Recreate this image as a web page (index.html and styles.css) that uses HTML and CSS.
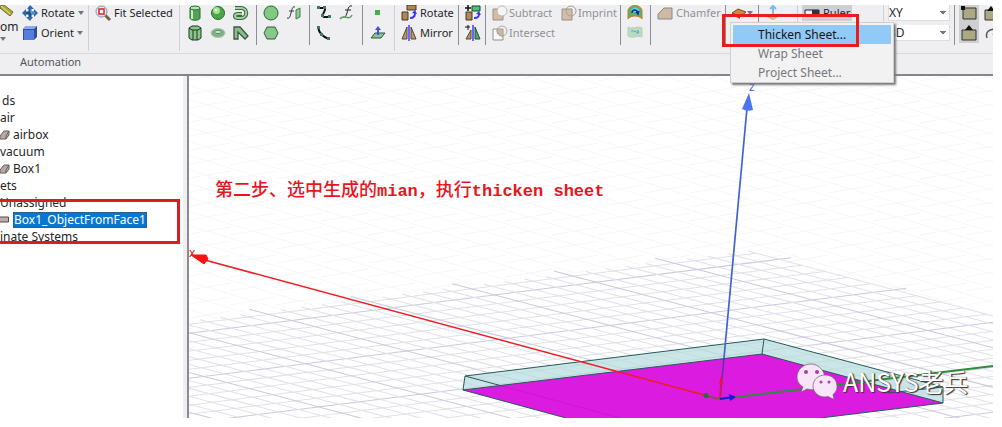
FILE: index.html
```html
<!DOCTYPE html>
<html lang="en">
<head>
<meta charset="utf-8">
<title>3D Modeler</title>
<link rel="stylesheet" href="styles.css">
</head>
<body>
<main class="app">
<header class="ribbon">
<div class="tools">
  <div class="group g-view">
    <button class="zoom-tool"><svg class="pencil" viewBox="0 0 14 12"><path d="M0 1l4-1 9 7-3 4-10-8z" fill="#b0ad3c" stroke="#6b6a32"/><path d="M1 1l9 8" stroke="#e8e6a0"/></svg><span>om</span><i class="caret"></i></button>
    <div class="pair">
      <button><svg class="ico" viewBox="0 0 16 16"><path d="M8 2v11M2 8h12" stroke="#1d4f86" stroke-width="3"/><path d="M8 0l4 4H5zM0 8l4-4v8zM16 8l-4-4v8zM8 16l-4-4h7z" fill="#2c6cad"/><path d="M9 4v4h4" fill="none" stroke="#8cc0ee"/></svg>Rotate<i class="caret"></i></button>
      <button><svg class="ico" viewBox="0 0 16 16"><path d="M1 4l3-3h11v11l-3 3H1z" fill="#2d4f9e"/><path d="M1 4l3-3h11l-3 3z" fill="#8eaaf0"/><path d="M2 5h10v10H2z" fill="#557de0"/></svg>Orient<i class="caret"></i></button>
    </div>
  </div>
  <div class="group g-fit tall"><button><svg class="ico" viewBox="0 0 16 16"><path d="M10 10l5 5" stroke="#7b5d4a" stroke-width="3"/><circle cx="6.500" cy="6.500" r="5.500" fill="#dbe7fb" stroke="#8a91a6"/><path d="M4 4h5v5H4z" fill="#fff" stroke="#e32222" stroke-width="1.500"/></svg>Fit Selected</button></div>
  <div class="group g-solid tall icons3">
    <button aria-label="Cylinder"><svg class="ico" viewBox="0 0 16 16"><path d="M3 3v10c0 3 10 3 10 0V3" fill="#54a354" stroke="#286b32"/><path d="M5 4v10" stroke="#c8edc5" stroke-width="2"/><ellipse cx="8" cy="3" rx="5" ry="2" fill="#b0e5a9" stroke="#286b32"/></svg></button>
    <button aria-label="Sphere"><svg class="ico" viewBox="0 0 16 16"><circle cx="8" cy="8" r="6.500" fill="#4ba447" stroke="#276f2e"/><circle cx="6.500" cy="5.500" r="3.500" fill="#9ee08c"/><circle cx="6" cy="5" r="1.500" fill="#e5ffdf"/></svg></button>
    <button aria-label="Helix"><svg class="ico" viewBox="0 0 16 16"><path d="M2 3h6c7 0 7 10 0 10H5c-4 0-4-4 0-4h4" fill="none" stroke="#3b6842" stroke-width="4"/><path d="M2 3h6c7 0 7 10 0 10H5c-4 0-4-4 0-4h4" fill="none" stroke="#a3cfa2" stroke-width="2"/></svg></button>
    <button aria-label="Regular polyhedron"><svg class="ico" viewBox="0 0 16 16"><path d="M2 3l3-2h6l3 2v10l-3 2H5l-3-2z" fill="#8ec48c" stroke="#153c1e"/><path d="M2 3l3 2h6l3-2M6 5v10M10 5v10" fill="none" stroke="#153c1e"/></svg></button>
    <button aria-label="Torus"><svg class="ico" viewBox="0 0 16 16"><ellipse cx="8" cy="8" rx="7" ry="4.500" fill="#80b487" stroke="#a9c8ac"/><ellipse cx="8" cy="7" rx="3.500" ry="1.500" fill="#d7eed8" stroke="#558b5c"/></svg></button>
    <button aria-label="Bend"><svg class="ico" viewBox="0 0 16 16"><path d="M1 14V2h6l8 9-3 3-7-7v7z" fill="#8fba8f" stroke="#345b3b" stroke-width="1.300"/></svg></button>
  </div>
  <div class="group g-sheet icons2">
    <button aria-label="Circle"><svg class="ico" viewBox="0 0 16 16"><circle cx="8" cy="8" r="7" fill="#80ca82" stroke="#31613d"/></svg></button>
    <button aria-label="Equation surface"><svg class="ico" viewBox="0 0 16 16"><path d="M9 2C6 1 6 5 5 8s-1 6-4 5M3 6h5" fill="none" stroke="#333"/><path d="M10 5l4-2v9l-4 2z" fill="#91cb91" stroke="#457c4b"/></svg></button>
    <button aria-label="Polygon"><svg class="ico" viewBox="0 0 16 16"><path d="M1 8l3-6h8l3 6-3 6H4z" fill="#87c98a" stroke="#31613d"/></svg></button>
  </div>
  <div class="group g-line icons2">
    <button aria-label="Polyline"><svg class="ico" viewBox="0 0 16 16"><path d="M2 3h6c4 0-4 8 0 9h6" fill="none" stroke="#111" stroke-width="2"/><path d="M1 1h3v3H1zM7 1h3v3H7zM5 9h3v3H5zM12 10h3v3h-3z" fill="#397b63"/></svg></button>
    <button aria-label="Equation curve"><svg class="ico" viewBox="0 0 16 16"><path d="M13 1C9 0 9 5 8 8s-2 5-4 4M6 5h6" fill="none" stroke="#222"/><path d="M1 14c4-6 9 3 12-4" fill="none" stroke="#67976d" stroke-width="1.500"/></svg></button>
    <button aria-label="Arc"><svg class="ico" viewBox="0 0 16 16"><path d="M2 2c1 6 5 10 11 12" fill="none" stroke="#111" stroke-width="2"/><path d="M1 1h3v3H1zM4 8h3v3H4zM11 12h3v3h-3z" fill="#397b63"/></svg></button>
  </div>
  <div class="group g-point">
    <button aria-label="Point"><svg class="ico" viewBox="0 0 16 16"><path d="M5 5h5v5H5z" fill="#43ad4b"/></svg></button>
    <button aria-label="Plane"><svg class="ico" viewBox="0 0 16 16"><path d="M1 13l4-5h10l-4 5z" fill="#91be97" stroke="#285a33"/><path d="M8 10V4" stroke="#444dec" stroke-width="2"/><path d="M5 5l3-4 3 4z" fill="#444dec"/></svg></button>
  </div>
  <div class="group g-rotate tall">
    <button><svg class="ico" viewBox="0 0 16 16"><path d="M6 0h9v5H6zM1 7h6v8H1z" fill="#aa8859" stroke="#493923"/><path d="M9 13c4 0 5-2 5-5" fill="none" stroke="#3838f3" stroke-width="2"/><path d="M11 8l3-3 2 4z" fill="#3838f3"/></svg>Rotate</button>
    <button><svg class="ico" viewBox="0 0 16 16"><path d="M6 2v12H1zM10 2v12h5z" fill="#b59870" stroke="#57452f"/><path d="M8 0v16" stroke="#686aff" stroke-width="2"/></svg>Mirror</button>
  </div>
  <div class="group g-copy">
    <button aria-label="Duplicate around axis"><svg class="ico" viewBox="0 0 16 16"><path d="M1 7h6v8H1z" fill="#aa8859" stroke="#493923"/><path d="M7 1h8v5H7z" fill="#4dc377" stroke="#174c27"/><path d="M3 0v6M0 3h6" stroke="#111" stroke-width="1.500"/><path d="M9 13c4 0 5-1 5-4" fill="none" stroke="#3838f3" stroke-width="2"/><path d="M11 9l3-3 2 4z" fill="#3838f3"/></svg></button>
    <button aria-label="Duplicate mirror"><svg class="ico" viewBox="0 0 16 16"><path d="M6 5v9H1z" fill="#b59870" stroke="#57452f"/><path d="M10 2v12h5z" fill="#56a474" stroke="#22532f"/><path d="M8 0v16" stroke="#686aff" stroke-width="2"/><path d="M3 0v5M0 2h5" stroke="#111"/></svg></button>
  </div>
  <div class="group g-bool muted">
    <button><svg class="ico" viewBox="0 0 16 16"><path d="M1 4h10v11H1z" fill="#d4bca8" stroke="#96918b"/><circle cx="10" cy="6" r="5" fill="#f5f5f5" stroke="#bbb"/></svg>Subtract</button>
    <button><svg class="ico" viewBox="0 0 16 16"><path d="M1 4h10v11H1z" fill="#d4bca8" stroke="#96918b"/><circle cx="10" cy="6" r="5" fill="none" stroke="#a69e97"/></svg>Imprint</button>
    <button><svg class="ico" viewBox="0 0 16 16"><path d="M1 4h10v11H1z" fill="#f8f8f8" stroke="#96918b"/><circle cx="10" cy="6" r="5" fill="#eee" stroke="#aaa"/><path d="M5 4h6v7C7 11 5 8 5 4z" fill="#d1b8a0" stroke="#a69e97"/></svg>Intersect</button>
  </div>
  <div class="group g-surface">
    <button aria-label="Move faces"><svg class="ico" viewBox="0 0 16 16"><path d="M1 14V5c2-6 12-6 14 0v9c-3-4-11-4-14 0z" fill="#55b565" stroke="#df732a"/><path d="M4 5c3-4 8-3 9 2v2c-2-3-6-3-8 0z" fill="#5fd2df"/><path d="M5 8c0-4 5-4 6 0M9 7l2 2 1-3" fill="none" stroke="#1828a8" stroke-width="1.500"/></svg></button>
    <button aria-label="Sheet surface"><svg class="ico" viewBox="0 0 16 16"><path d="M1 2c5 3 8-2 14 1v9c-5-2-9 2-14-1z" fill="#b1dfc6" stroke="#c7c9b2"/><path d="M4 6c4-1 4 2 8 1M10 5l2 2-2 2" fill="none" stroke="#8097b2"/></svg></button>
  </div>
  <div class="group g-chamfer muted"><button><svg class="ico" viewBox="0 0 16 16"><path d="M1 14V9l6-6h8v11z" fill="#ceb9a6" stroke="#8c8883"/></svg>Chamfer</button></div>
  <div class="group g-sheetmenu"><button aria-label="Sheet operations"><svg class="ico" viewBox="0 0 16 16"><path d="M1 8l6-4 8 3-6 5z" fill="#c78c3c" stroke="#70502b"/><path d="M1 8v2l8 4v-3z" fill="#80582e"/></svg><i class="caret"></i></button>
    <div class="menu" role="menu"><button class="chosen" role="menuitem">Thicken Sheet...</button><button role="menuitem">Wrap Sheet</button><button role="menuitem">Project Sheet...</button></div>
    <div class="menu-mark"></div>
  </div>
  <div class="group g-axis"><button aria-label="Coordinate system"><svg class="ico" viewBox="0 0 16 16"><path d="M8 12V2M5 4l3-3 3 3" fill="none" stroke="#83b8db" stroke-width="2"/><path d="M2 11l6 3 6-4" fill="none" stroke="#e4b17b" stroke-width="2"/></svg></button></div>
  <div class="group g-ruler tall"><button class="pressed"><svg class="ico" viewBox="0 0 16 16"><path d="M1 5h14v6H1z" fill="#eee" stroke="#222"/><path d="M8 5h7v6H8z" fill="#333"/></svg>Ruler</button></div>
  <div class="group g-select tall">
    <select aria-label="Drawing plane"><option>XY</option></select>
    <select aria-label="Movement mode"><option>3D</option></select>
  </div>
  <div class="group g-snap icons2">
    <button class="pressed" aria-label="Snap to vertex"><svg class="ico" viewBox="0 0 16 16"><path d="M2 3h13v11H2z" fill="#aaa982" stroke="#333"/><path d="M0 1h4v4H0z" fill="#111"/></svg></button>
    <button aria-label="Snap to edge center"><svg class="ico" viewBox="0 0 16 16"><path d="M1 5h14v10H1z" fill="#aaa982" stroke="#333"/><path d="M3 6l4-5 4 5z" fill="#111"/></svg></button>
    <button class="pressed" aria-label="Snap to face center"><svg class="ico" viewBox="0 0 16 16"><path d="M1 5h14v10H1z" fill="#aaa982" stroke="#333"/><path d="M4 5l4-5 4 5z" fill="#111"/></svg></button>
    <button aria-label="Snap to arc"><svg class="ico" viewBox="0 0 16 16"><path d="M3 13c-2-6 2-9 9-9M9 9l5 5" fill="none" stroke="#555" stroke-width="1.500"/></svg></button>
  </div>
</div>
<div class="caption">Automation</div>
</header>
<div class="work">
<nav class="tree" aria-label="Model tree">
  <ul>
    <li class="inset">ds</li>
    <li>air</li>
    <li><svg class="part" viewBox="0 0 10 10"><path d="M0 6l4-5h5v4L6 9H0z" fill="#b8a8a8" stroke="#655c5c"/><path d="M9 1L6 6v3" fill="none" stroke="#655c5c"/></svg>airbox</li>
    <li>vacuum</li>
    <li><svg class="part" viewBox="0 0 10 10"><path d="M0 6l4-5h5v4L6 9H0z" fill="#b8a8a8" stroke="#655c5c"/><path d="M9 1L6 6v3" fill="none" stroke="#655c5c"/></svg>Box1</li>
    <li>ets</li>
    <li>Unassigned</li>
    <li><svg class="part" viewBox="0 0 10 10"><path d="M-2 2H8.500v5H-2z" fill="#c0aaa8" stroke="#554c4c"/></svg><span class="selected">Box1_ObjectFromFace1</span></li>
    <li>inate Systems</li>
  </ul>
  <div class="tree-mark"></div>
</nav>
<section class="view" aria-label="3D view">
<svg class="scene" viewBox="189 76 804 342" preserveAspectRatio="xMinYMin slice">
  <defs>
    <pattern id="haze" width="46" height="14" patternUnits="userSpaceOnUse"><path d="M0 0l46 14M0 11l46-8" stroke="#f7f7f9" fill="none"/></pattern>
    <g id="rowlines"><path d="M0 7h900M0 47h900M0 67h900M0 87h900" class="minor"/><path d="M-12 27h912" class="major"/></g>
    <g id="collines"><path d="M0 0v700M20 0v700M40 0v700M60 0v700" class="minor"/><path d="M80-10v710" class="major"/></g>
  </defs>
  <rect x="189" y="76" width="804" height="342" fill="url(#haze)"/>
  <path d="M737 253L993 319V418H189V322z" fill="#fff"/>
  <g transform="matrix(-1.015 .1275 1.15 .305 748 251)">
    <use href="#rowlines"/><use href="#rowlines" y="100"/><use href="#rowlines" y="200"/><use href="#rowlines" y="300"/><use href="#rowlines" y="400"/><use href="#rowlines" y="500"/>
    <use href="#collines"/><use href="#collines" x="100"/><use href="#collines" x="200"/><use href="#collines" x="300"/><use href="#collines" x="400"/><use href="#collines" x="500"/><use href="#collines" x="600"/><use href="#collines" x="700"/><use href="#collines" x="800"/>
  </g>
  <path d="M465 376L764 339 943 387V403L762 354 463 390z" fill="#b5dcdb" fill-opacity=".7"/>
  <path d="M463 390L762 354 943 403 820 418H566z" fill="#dc1be0"/>
  <path d="M463 390L465 376 764 339 943 387V403L820 418M764 339L762 354M463 390L762 354 943 403M465 376L502 386M943 387L888 393M463 390L566 418" fill="none" stroke="#24595a"/>
  <path d="M502 386L620 418" stroke="#c817d0"/>
  <path d="M720 399L993 366" stroke="#2e8b37" stroke-width="2"/>
  <path d="M201 259L708 396" stroke="#ee1c24" stroke-width="1.500"/>
  <path d="M191 255l15 0 2 4-4 5z" fill="#f11" stroke="#f11"/>
  <path d="M747 108L724 358" stroke="#4263d6" stroke-width="1.700"/>
  <path d="M724 358L720 399" stroke="#65329a" stroke-width="1.500"/>
  <path d="M749 93l4 17q-6 2-11-1z" fill="#4a73f0"/>
  <path d="M720 398L721 378" stroke="#f1113a" stroke-width="1.500"/><path d="M721 376l2 8h-4z" fill="#f1113a"/>
  <path d="M706 396L720 399" stroke="#6e5b30" stroke-width="1.500"/><circle cx="706" cy="395.500" r="2.500" fill="#276d3a"/>
  <path d="M720 399L733 397" stroke="#1616df" stroke-width="2"/><path d="M729 394l7 3-6 4z" fill="#1616df"/>
  <text x="189" y="257" class="axis" fill="#e11">x</text>
  <text x="749" y="91" class="axis" fill="#3b5be0">z</text>
  <text x="215" y="196" class="note"><tspan>第二步、选中生成的</tspan><tspan class="latin">mian</tspan><tspan>，执行</tspan><tspan class="latin">thicken sheet</tspan></text>
  <g fill="#f8e5f8" stroke="#765877" stroke-width=".7">
    <path d="M811 364c-8 0-14 6-14 13 0 5 3 8 6 10l-2 5 6-3c10 3 19-3 18-12-1-7-7-13-14-13z"/>
    <path d="M825 375c-7 0-12 5-12 11s5 11 12 11l3-.5 6 3-1-5c3-2 4-5 4-8 0-7-5-11.500-12-11.500z"/>
  </g>
  <g fill="#a33fa5"><circle cx="806" cy="372" r="2"/><circle cx="817" cy="372" r="2"/><circle cx="821" cy="382" r="1.500"/><circle cx="829" cy="382" r="1.500"/></g>
  <text x="843" y="392" class="brand">ANSYS老兵</text>
</svg>
</section>
</div>
</main>
</body>
</html>
```
FILE: styles.css
```css
* { box-sizing: border-box; }
body { margin: 0; background: #fff; color: #262626; font: 12px/16px "Noto Sans", "Noto Sans CJK SC", sans-serif; }
.app { display: flex; flex-direction: column; height: 100vh; padding: 5px 9px 9px 0; overflow: hidden; }
button { display: flex; align-items: center; gap: 3px; height: 16px; padding: 0; border: 0; background: none; color: inherit; font: inherit; font-size: 11px; white-space: nowrap; }
.ribbon { flex: none; background: #efeff1; position: relative; z-index: 1; border-bottom: 2px solid #85858a; }
.tools { display: flex; height: 49px; border-bottom: 1px solid #d9d9df; }
.group { position: relative; flex: none; display: grid; grid-template-rows: 16px 16px; align-content: start; justify-content: start; gap: 4px; height: 40px; padding-left: 6px; border-left: 1px solid #8d8d98; }
.tall { height: 46px; border-color: #cfcfd8; }
.ico { flex: none; width: 16px; height: 16px; fill: none; }
.icons3 { grid-template-columns: repeat(3, 16px); column-gap: 7px; }
.icons2 { grid-template-columns: repeat(2, 16px); column-gap: 7px; }
.muted { color: #909096; }
.caret { flex: none; margin-left: 2px; border: 3px solid transparent; border-top: 4px solid #74747c; border-bottom: 0; }
.g-view { display: flex; gap: 7px; width: 88px; padding: 0; border: 0; }
.g-view .pair .caret { margin-left: 0; }
.zoom-tool { flex-direction: column; align-items: flex-start; gap: 2px; width: 15px; height: 40px; font-size: 12px; }
.zoom-tool .caret { margin: 0; }
.pencil { width: 14px; height: 12px; fill: none; }
.pair { display: grid; grid-template-rows: 16px 16px; align-content: start; gap: 4px; }
.g-fit { width: 91px; }
.g-solid { width: 77px; padding-left: 7px; }
.g-sheet { width: 53px; }
.g-line { width: 53px; }
.g-point { width: 32px; padding-left: 7px; }
.g-rotate { width: 64px; }
.g-copy { width: 27px; }
.g-bool { grid-template-columns: auto auto; column-gap: 6px; width: 135px; }
.g-bool button { gap: 1px; }
.g-surface { width: 30px; }
.g-chamfer { width: 75px; }
.g-sheetmenu { width: 33px; padding-left: 5px; }
.g-sheetmenu .caret { margin-left: 0; }
.g-sheetmenu > button { gap: 0; }
.g-axis { width: 39px; }
.g-ruler { width: 86px; padding-left: 4px; }
.g-snap { flex: 1; overflow: hidden; }
.pressed { background: #cfcfd2; }
.g-ruler .pressed { width: 50px; padding-left: 2px; }
.g-snap .pressed { outline: 2px solid #cfcfd2; }
.g-select { width: 71px; padding-left: 4px; }
select { width: 62px; height: 16px; padding: 0 14px 0 0; border: 1px solid #dcdce2; border-top: 0; color: #262626; font: inherit; font-size: 12px; line-height: 15px; appearance: none; background: linear-gradient(135deg, #74747c 50%, transparent 50%) right 3px center / 3px 4px no-repeat, linear-gradient(225deg, #74747c 50%, transparent 50%) right 6px center / 3px 4px no-repeat, #fff; }
.caption { height: 20px; padding-left: 20px; line-height: 15px; color: #55555c; font-size: 11px; }
.menu { position: absolute; z-index: 2; top: 17px; left: 4px; width: 164px; padding: 2px 2px 0; background: #f2f2f3; border: 1px solid #d0d0d0; box-shadow: 2px 2px 2px #777; }
.menu button { width: 100%; height: 19px; padding-left: 25px; color: #77777c; font-size: 12px; }
.menu .chosen { background: #91c9f7; color: #151515; }
.menu-mark { position: absolute; z-index: 3; top: 9px; left: -4px; width: 137px; height: 33px; border: 3px solid #ed1c1c; }
.work { flex: 1; display: flex; gap: 4px; min-height: 0; background: #efeff1; }
.tree { position: relative; flex: none; width: 183px; padding-top: 16px; background: #fff; }
.tree ul { margin: 0; padding: 0; list-style: none; }
.tree li { display: flex; align-items: center; gap: 3px; height: 17px; white-space: nowrap; }
.tree .inset { padding-left: 2px; }
.part { width: 10px; height: 10px; }
.selected { padding: 0 1px; background: #0877d1; color: #fff; outline: 1px dotted #4b4b4b; outline-offset: -1px; }
.tree-mark { position: absolute; top: 123px; left: -4px; width: 184px; height: 45px; border: 3px solid #dc1c24; }
.view { flex: 1; min-width: 0; border-left: 2px solid #8c8c90; background: #fff; overflow: hidden; }
.scene { display: block; width: 100%; height: 100%; }
.minor, .major { fill: none; stroke: #e0e0ea; stroke-width: 1px; vector-effect: non-scaling-stroke; }
.major { stroke: #c9c9df; }
.axis { font: 12px "Noto Sans", sans-serif; }
.note { fill: #e8151c; font: 500 18px "Noto Sans CJK SC", sans-serif; }
.latin { font: bold 17px "Liberation Mono", monospace; }
.brand { fill: #fff; font: 25px "Noto Sans CJK SC", sans-serif; text-shadow: 1px 1px 1px #333, 1px 0 1px #555; }
```
